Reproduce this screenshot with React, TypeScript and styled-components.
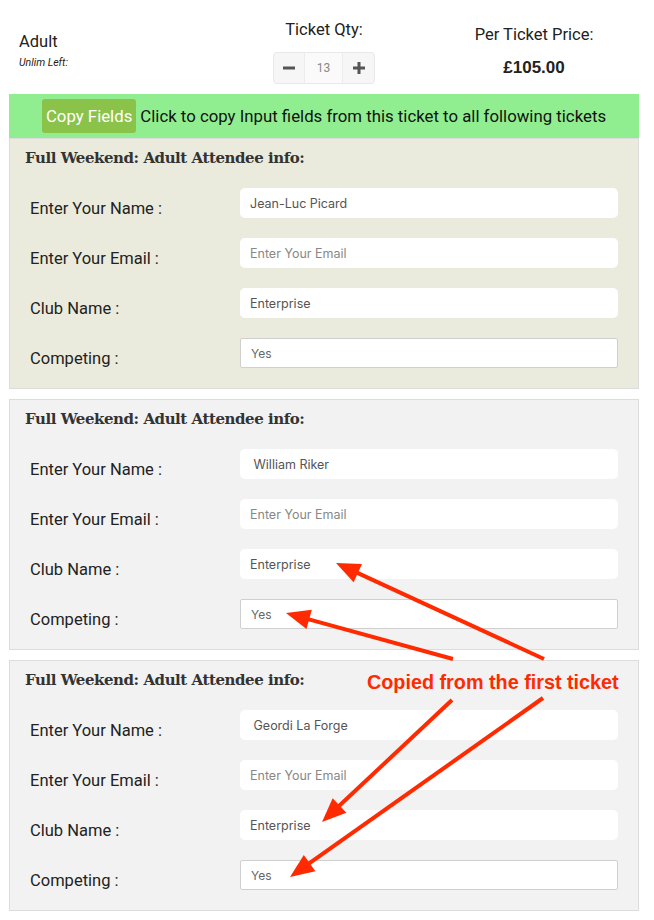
import React from "react";
import styled, { createGlobalStyle } from "styled-components";

const GlobalStyle = createGlobalStyle`
  html, body { margin: 0; padding: 0; background: #ffffff; }
  body { font-family: Roboto, "Liberation Sans", Arial, sans-serif; color: #222; }
  * { box-sizing: border-box; }
`;

const Page = styled.div`
  position: relative;
  width: 654px;
  padding: 0 15px 9px 9px;
`;

const Header = styled.div`
  display: grid;
  grid-template-columns: repeat(3, 1fr);
  height: 94px;
`;

const HeaderCol = styled.div<{ $align: "left" | "center"; $top: number }>`
  display: flex;
  flex-direction: column;
  align-items: ${(p) => (p.$align === "left" ? "flex-start" : "center")};
  padding-top: ${(p) => p.$top}px;
  padding-left: ${(p) => (p.$align === "left" ? 10 : 0)}px;
`;

const HeadText = styled.div`
  font-size: 16.5px;
  line-height: 20px;
  color: #222;
`;

const Remaining = styled.div`
  font-size: 10.5px;
  line-height: 12px;
  font-style: italic;
  color: #222;
  margin-top: 5px;
`;

const Price = styled.div`
  font-family: "Liberation Sans", Arial, sans-serif;
  font-size: 17px;
  line-height: 20px;
  font-weight: bold;
  color: #222;
  margin-top: 13px;
`;

const QtyBox = styled.div`
  display: flex;
  margin-top: 12px;
  height: 32px;
  border: 1px solid #e8e8e8;
  border-radius: 4px;
  background: #f6f6f6;
  overflow: hidden;
`;

const QtyBtn = styled.div<{ $w: number }>`
  width: ${(p) => p.$w}px;
  display: flex;
  align-items: center;
  justify-content: center;
  color: #555;
`;

const QtyNum = styled.div`
  width: 39px;
  display: flex;
  align-items: center;
  justify-content: center;
  background: #fafafa;
  border-left: 1px solid #ececec;
  border-right: 1px solid #ececec;
  font-size: 12px;
  color: #888;
`;

const CopyBar = styled.div`
  height: 44px;
  background: #90ee90;
  display: flex;
  align-items: center;
  justify-content: center;
  gap: 4px;
  font-size: 16.8px;
  color: #111;
`;

const CopyButton = styled.button`
  height: 34px;
  padding: 0 4px;
  border: none;
  border-radius: 3px;
  background: #8bc34a;
  color: #ffffff;
  font-family: Roboto, "Liberation Sans", Arial, sans-serif;
  font-size: 16.8px;
  cursor: pointer;
`;

const Card = styled.section<{ $tint: string; $gap: number }>`
  background: ${(p) => p.$tint};
  border: 1px solid #dcdcdc;
  margin-top: ${(p) => p.$gap}px;
  padding: 7px 20px 20px 15px;
`;

const CardTitle = styled.h3`
  margin: 0 0 18px 0;
  font-family: "DejaVu Serif", "Liberation Serif", serif;
  font-weight: bold;
  font-size: 15px;
  line-height: 24px;
  color: #333;
  letter-spacing: -0.45px;
`;

const Rows = styled.div`
  display: grid;
  grid-template-columns: 210px 1fr;
  grid-auto-rows: 30px;
  row-gap: 20px;
  margin-left: 5px;
`;

const Label = styled.label`
  align-self: end;
  font-size: 16.5px;
  line-height: 18px;
  color: #222;
`;

const Field = styled.input<{ $boxed?: boolean }>`
  width: 100%;
  height: 30px;
  background: #ffffff;
  border: ${(p) => (p.$boxed ? "1px solid #cfcfcf" : "none")};
  border-radius: ${(p) => (p.$boxed ? "2px" : "5px")};
  padding: 0 10px;
  font-family: "Inter", "Liberation Sans", sans-serif;
  font-size: ${(p) => (p.$boxed ? "12px" : "12.5px")};
  color: ${(p) => (p.$boxed ? "#666" : "#555")};
  outline: none;
  &::placeholder { color: #888; }
`;

const Overlay = styled.svg`
  position: absolute;
  left: 0;
  top: 0;
  pointer-events: none;
`;

const Note = styled.div`
  position: absolute;
  left: 367px;
  top: 671px;
  font-family: "Liberation Sans", Arial, sans-serif;
  font-weight: bold;
  font-size: 19.8px;
  line-height: 22px;
  color: #ff2a00;
  white-space: nowrap;
`;

const people: { name: string; tint: string }[] = [
  { name: "Jean-Luc Picard", tint: "#ebebdd" },
  { name: " William Riker", tint: "#f2f2f2" },
  { name: " Geordi La Forge", tint: "#f2f2f2" },
];

const arrows: [number, number, number, number][] = [
  [544, 659, 336, 563],
  [453, 659, 286, 613],
  [452, 700, 322, 822],
  [543, 698, 290, 877],
];

function Arrow({ a }: { a: [number, number, number, number] }) {
  const [x1, y1, x2, y2] = a;
  const dx = x2 - x1;
  const dy = y2 - y1;
  const len = Math.hypot(dx, dy);
  const ux = dx / len;
  const uy = dy / len;
  const hl = 24;
  const hw = 10;
  const bx = x2 - ux * hl;
  const by = y2 - uy * hl;
  const px = -uy;
  const py = ux;
  const pts = `${x2},${y2} ${bx + px * hw},${by + py * hw} ${bx - px * hw},${by - py * hw}`;
  return (
    <g>
      <line x1={x1} y1={y1} x2={bx + ux * 4} y2={by + uy * 4} stroke="#ff2a00" strokeWidth={4} />
      <polygon points={pts} fill="#ff2a00" />
    </g>
  );
}

function AttendeeCard({ name, tint, gap }: { name: string; tint: string; gap: number }) {
  return (
    <Card $tint={tint} $gap={gap}>
      <CardTitle>Full Weekend: Adult Attendee info:</CardTitle>
      <Rows>
        <Label>Enter Your Name :</Label>
        <Field defaultValue={name} />
        <Label>Enter Your Email :</Label>
        <Field placeholder="Enter Your Email" />
        <Label>Club Name :</Label>
        <Field defaultValue="Enterprise" />
        <Label>Competing :</Label>
        <Field $boxed defaultValue="Yes" />
      </Rows>
    </Card>
  );
}

export default function App() {
  return (
    <>
      <GlobalStyle />
      <Page>
        <Header>
          <HeaderCol $align="left" $top={32}>
            <HeadText>Adult</HeadText>
            <Remaining>Unlim Left:</Remaining>
          </HeaderCol>
          <HeaderCol $align="center" $top={20}>
            <HeadText>Ticket Qty:</HeadText>
            <QtyBox>
              <QtyBtn $w={30}>
                <svg width="12" height="12" viewBox="0 0 12 12">
                  <rect x="0" y="4.5" width="12" height="3" fill="#555" />
                </svg>
              </QtyBtn>
              <QtyNum>13</QtyNum>
              <QtyBtn $w={31}>
                <svg width="12" height="12" viewBox="0 0 12 12">
                  <rect x="0" y="4.5" width="12" height="3" fill="#555" />
                  <rect x="4.5" y="0" width="3" height="12" fill="#555" />
                </svg>
              </QtyBtn>
            </QtyBox>
          </HeaderCol>
          <HeaderCol $align="center" $top={25}>
            <HeadText>Per Ticket Price:</HeadText>
            <Price>£105.00</Price>
          </HeaderCol>
        </Header>
        <CopyBar>
          <CopyButton>Copy Fields</CopyButton>
          <span>Click to copy Input fields from this ticket to all following tickets</span>
        </CopyBar>
        {people.map((p, i) => (
          <AttendeeCard key={i} name={p.name} tint={p.tint} gap={i === 0 ? 0 : 10} />
        ))}
        <Overlay width={654} height={920} viewBox="0 0 654 920">
          {arrows.map((a, i) => (
            <Arrow key={i} a={a} />
          ))}
        </Overlay>
        <Note>Copied from the first ticket</Note>
      </Page>
    </>
  );
}
